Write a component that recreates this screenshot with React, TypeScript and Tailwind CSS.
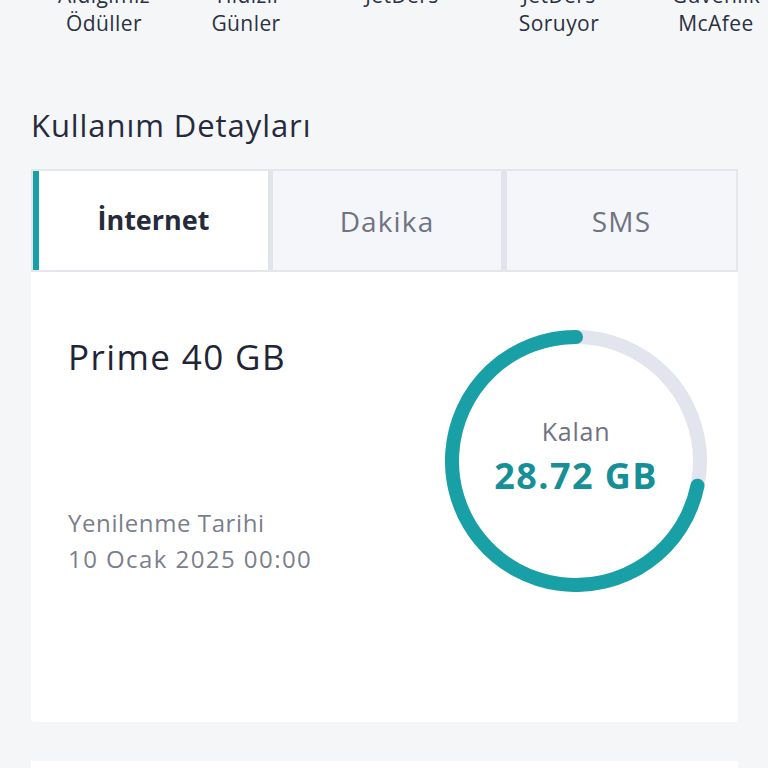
import { memo } from 'react';

const shortcuts = [
  { top: 'Aldığımız', bottom: 'Ödüller', ml: 'ml-[54px]' },
  { top: 'Yıldızlı', bottom: 'Günler', ml: 'ml-[42px]' },
  { top: 'JetDers', bottom: '', ml: 'ml-[56px]' },
  { top: 'JetDers', bottom: 'Soruyor', ml: 'ml-[57px]' },
  { top: 'Güvenlik', bottom: 'McAfee', ml: 'ml-[57px]' },
];

const UsageRing = memo(function UsageRing() {
  // 28.72 / 40 left, drawn counter-clockwise from the top
  return (
    <div className="relative w-[262px] h-[262px] shrink-0">
      <svg viewBox="0 0 262 262" className="w-full h-full">
        <circle cx="131" cy="131" r="124" fill="none" stroke="#e3e5ee" strokeWidth="14" />
        <path
          d="M 131 7 A 124 124 0 1 0 252.5 155.7"
          fill="none"
          stroke="#19a0a7"
          strokeWidth="14"
          strokeLinecap="round" />
      </svg>
      <div className="absolute inset-0 flex flex-col items-center justify-center pb-[8px]">
        <span className="text-[25px] leading-[30px] tracking-[0.03em] text-[#6e7282]">Kalan</span>
        <span className="text-[36px] leading-[44px] tracking-[0.04em] font-bold text-[#178f96] mt-[8px]">28.72 GB</span>
      </div>
    </div>);

});

export default function App() {
  return (
    <div
      className="h-[768px] overflow-hidden bg-[#f5f6f8] text-[#252b3d]"
      style={{ fontFamily: '"Open Sans", "Noto Sans", sans-serif' }}>
      
      {/* Shortcut labels (scrolled, icons out of view) */}
      <div className="flex -mt-[19px]">
        {shortcuts.map((s, i) =>
        <div key={i} className={`${s.ml} w-[100px] shrink-0 text-center text-[21px] leading-[28px] tracking-[0.02em] text-[#2a3142]`}>
            <div>{s.top}</div>
            <div>{s.bottom || '\u00a0'}</div>
          </div>
        )}
      </div>

      <div className="px-[31px] pr-[30px]">
        <h2 className="mt-[70px] text-[31px] leading-[36px] tracking-[0.03em] text-[#252b3d]">Kullanım Detayları</h2>

        {/* Tabs */}
        <div className="mt-[26px] flex h-[103px] border-2 border-[#e4e6ec] bg-[#e2e4ec]">
          <div className="flex w-[235px] shrink-0 bg-white">
            <div className="w-[6px] bg-[#19a0a7]" />
            <div className="flex-1 flex items-center justify-center text-[27px] font-bold text-[#252b3d]">
              İnternet
            </div>
          </div>
          <div className="ml-[5px] w-[228px] shrink-0 flex items-center justify-center bg-[#f5f6fa] text-[28px] tracking-[0.04em] text-[#6f7382]">
            Dakika
          </div>
          <div className="ml-[6px] flex-1 flex items-center justify-center bg-[#f5f6fa] text-[28px] tracking-[0.04em] text-[#6f7382]">
            SMS
          </div>
        </div>

        {/* Usage card */}
        <div className="h-[450px] bg-white rounded-b-[4px] flex justify-between pl-[37px] pr-[31px] pt-[58px]">
          <div className="flex flex-col h-[262px]">
            <div className="mt-[7px] text-[35px] leading-[40px] tracking-[0.04em] font-medium text-[#1f2537]">Prime 40 GB</div>
            <div className="mt-auto mb-[15px] text-[24px] leading-[36px] text-[#7b7f8c]">
              <div className="tracking-[0.025em]">Yenilenme Tarihi</div>
              <div className="tracking-[0.06em]">10 Ocak 2025 00:00</div>
            </div>
          </div>
          <UsageRing />
        </div>

        <div className="mt-[39px] h-[60px] bg-white" />
      </div>
    </div>);

}
